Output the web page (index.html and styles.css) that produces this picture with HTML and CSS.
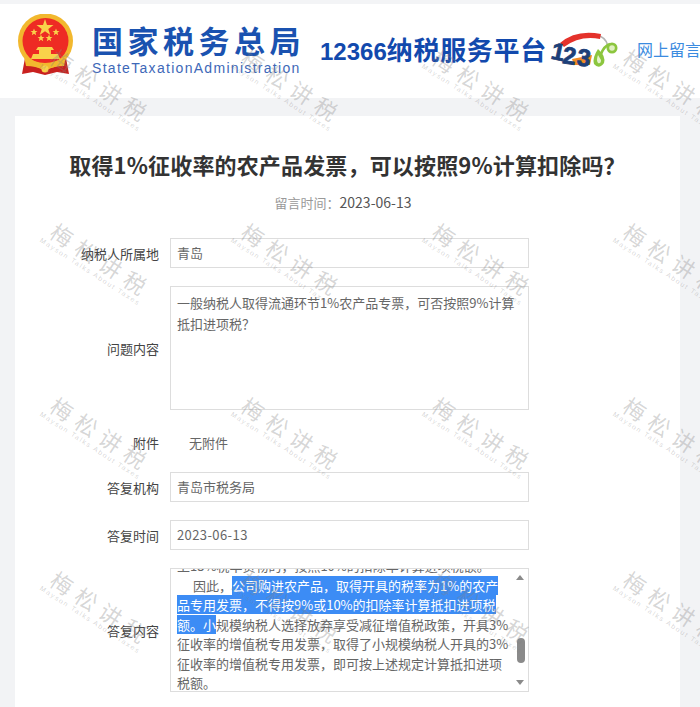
FILE: index.html

```html
<!DOCTYPE html>
<html>
<head>
  <meta charset="utf-8" />
  <meta name="viewport" content="width=device-width, initial-scale=1" />
  <title>留言详情</title>
  <link rel="stylesheet" href="styles.css">
</head>
<body>
  <div class="top-strip"></div>
  <div class="header">
    <svg class="emblem" viewBox="0 0 59 63">
      <defs>
        <polygon id="star" points="0,-3.500 1,-1 3.500,-1 1.500,0.600 2.200,3.200 0,1.700 -2.200,3.200 -1.500,0.600 -3.500,-1 -1,-1" fill="#f9d24a" />
      </defs>
      <path d="M9 44 L6 60 L17 58 L29 61 L41 58 L53 60 L50 44 Z" fill="#c9201f" />
      <circle cx="29.500" cy="27" r="27.500" fill="#f2b82e" />
      <circle cx="29.500" cy="27" r="23" fill="#ee2b24" />
      <polygon points="29,5 31,11 37.500,11 32.300,15 34.300,21 29,17.300 23.700,21 25.700,15 20.500,11 27,11" fill="#f9d24a" />
      <use href="#star" x="18" y="18" />
      <use href="#star" x="40" y="18" />
      <use href="#star" x="25" y="24" />
      <use href="#star" x="33" y="24" />
      <path d="M22 33 L36 33 L38 36 L35 36 L35 40 L42 40 L44 45 L15 45 L17 40 L23 40 L23 36 L20 36 Z" fill="#f9d24a" />
      <path d="M8 42 Q29 56 50 42 L48 52 Q38 52 31 56 L27 56 Q20 52 10 52 Z" fill="#f2b82e" />
      <circle cx="29" cy="55" r="3.500" fill="#f9d24a" />
    </svg>
    <div class="brand">
      <div class="brand-cn">国家税务总局</div>
      <div class="brand-en">StateTaxationAdministration</div>
    </div>
    <div class="platform"><span class="platform-num">12366</span>纳税服务平台</div>
    <svg class="badge" viewBox="0 0 68 50">
      <path d="M50 8 Q58 12 58 21" fill="none" stroke="#b5b5b5" stroke-width="1.500" />
      <path d="M10 15 Q26 1 51 6 L50 11 Q30 7 14 19 Z" fill="#e4322b" />
      <path d="M22 31 L42 27 L40 37 L24 37 Z" fill="#f08a24" />
      <path d="M48 21 Q42 30 44 36 Q49 42 54 35 Q56 28 48 21 Z" fill="#8cc63f" />
      <path d="M48 27 Q46 32 48 35 Q51 36 51 32 Z" fill="#e4f2cc" />
      <path d="M51 26 Q54 18 60 16" fill="none" stroke="#8cc63f" stroke-width="2.500" />
      <circle cx="62" cy="20" r="5.500" fill="#8cc63f" />
      <circle cx="62" cy="20" r="2.800" fill="#dff0c0" />
      <text class="badge-num" x="1.500" y="32" transform="rotate(12 8 24)">1</text>
      <text class="badge-num" x="13" y="36" transform="rotate(8 20 27)">2</text>
      <text class="badge-num" x="27.500" y="38" transform="rotate(8 34 29)">3</text>
    </svg>
    <div class="leave-msg">网上留言</div>
  </div>

  <div class="main">
    <div class="card">
      <h1 class="title">取得1%征收率的农产品发票，可以按照9%计算扣除吗？</h1>
      <div class="msg-time"><span class="muted">留言时间：</span><span class="date">2023-06-13</span></div>

      <div class="row row-input">
        <div class="label">纳税人所属地</div>
        <div class="field">青岛</div>
      </div>
      <div class="row row-area">
        <div class="label">问题内容</div>
        <div class="field field-area">一般纳税人取得流通环节1%农产品专票，可否按照9%计算抵扣进项税？</div>
      </div>
      <div class="row row-plain">
        <div class="label">附件</div>
        <div class="plain">无附件</div>
      </div>
      <div class="row row-input">
        <div class="label">答复机构</div>
        <div class="field">青岛市税务局</div>
      </div>
      <div class="row row-input">
        <div class="label">答复时间</div>
        <div class="field field-date">2023-06-13</div>
      </div>
      <div class="row row-area">
        <div class="label">答复内容</div>
        <div class="field field-reply">
          <div class="reply-text">
            <p>上13%税率货物的，按照10%的扣除率计算进项税额。</p>
            <p class="indent">因此，<span class="sel">公司购进农产品，取得开具的税率为1%的农产品专用发票，不得按9%或10%的扣除率计算抵扣进项税额。小</span>规模纳税人选择放弃享受减征增值税政策，开具3%征收率的增值税专用发票，取得了小规模纳税人开具的3%征收率的增值税专用发票，即可按上述规定计算抵扣进项税额。</p>
          </div>
          <div class="scrollbar">
            <span class="arrow-up"></span>
            <span class="thumb"></span>
            <span class="arrow-down"></span>
          </div>
        </div>
      </div>
    </div>
  </div>

  <div class="watermarks">
    <div class="wm"><b>梅松讲税</b><i>Mayson Talks About Taxes</i></div>
    <div class="wm"><b>梅松讲税</b><i>Mayson Talks About Taxes</i></div>
    <div class="wm"><b>梅松讲税</b><i>Mayson Talks About Taxes</i></div>
    <div class="wm"><b>梅松讲税</b><i>Mayson Talks About Taxes</i></div>
    <div class="wm"><b>梅松讲税</b><i>Mayson Talks About Taxes</i></div>
    <div class="wm"><b>梅松讲税</b><i>Mayson Talks About Taxes</i></div>
    <div class="wm"><b>梅松讲税</b><i>Mayson Talks About Taxes</i></div>
    <div class="wm"><b>梅松讲税</b><i>Mayson Talks About Taxes</i></div>
    <div class="wm"><b>梅松讲税</b><i>Mayson Talks About Taxes</i></div>
    <div class="wm"><b>梅松讲税</b><i>Mayson Talks About Taxes</i></div>
    <div class="wm"><b>梅松讲税</b><i>Mayson Talks About Taxes</i></div>
    <div class="wm"><b>梅松讲税</b><i>Mayson Talks About Taxes</i></div>
    <div class="wm"><b>梅松讲税</b><i>Mayson Talks About Taxes</i></div>
    <div class="wm"><b>梅松讲税</b><i>Mayson Talks About Taxes</i></div>
    <div class="wm"><b>梅松讲税</b><i>Mayson Talks About Taxes</i></div>
    <div class="wm"><b>梅松讲税</b><i>Mayson Talks About Taxes</i></div>
  </div>
</body>
</html>
```

FILE: styles.css

```css
html,
body {
  height: 707px;
}
body {
  margin: 0;
  position: relative;
  overflow: hidden;
  background: #f2f3f5;
  font-family: "Noto Sans CJK SC", "Liberation Sans", sans-serif;
  font-size: 13px;
  color: #666;
}
.top-strip {
  height: 4px;
  background: #f3f4f6;
}
.header {
  display: flex;
  align-items: center;
  height: 94px;
  padding-left: 16px;
  background: #fff;
  overflow: hidden;
  white-space: nowrap;
}
.emblem {
  flex: none;
  width: 59px;
  height: 63px;
  margin-top: -12px;
}
.brand {
  flex: none;
  width: 208px;
  margin-left: 17px;
  margin-top: -4px;
}
.brand-cn {
  font-size: 31px;
  font-weight: 700;
  line-height: 38px;
  letter-spacing: 4.500px;
  color: #1a52b0;
}
.brand-en {
  margin-top: 1px;
  font-family: "Liberation Sans", sans-serif;
  font-size: 14px;
  line-height: 17px;
  letter-spacing: 1.300px;
  color: #3e68b8;
}
.platform {
  flex: none;
  width: 226px;
  margin-left: 20px;
  margin-top: -6px;
  font-size: 26px;
  font-weight: 700;
  letter-spacing: 0.700px;
  color: #1249ad;
}
.platform-num {
  font-family: "Liberation Sans", sans-serif;
  font-size: 24px;
  letter-spacing: 0;
}
.badge {
  flex: none;
  width: 68px;
  height: 50px;
  margin-left: 4px;
  margin-top: 4px;
}
.badge-num {
  font-family: "Liberation Sans", sans-serif;
  font-size: 24px;
  font-weight: 700;
  fill: #1d3f78;
  stroke: #1d3f78;
  stroke-width: 0.800px;
}
.leave-msg {
  flex: none;
  margin-left: 19px;
  margin-top: -4px;
  font-size: 16px;
  color: #3b8be0;
}
.main {
  padding: 18px 20px 0 15px;
}
.card {
  height: 591px;
  padding-top: 31px;
  background: #fff;
  overflow: hidden;
}
.title {
  margin: 0;
  font-size: 22px;
  font-weight: 700;
  line-height: 34px;
  letter-spacing: 0.160px;
  text-align: center;
  color: #333;
}
.msg-time {
  margin-top: 11px;
  padding-right: 9px;
  line-height: 20px;
  text-align: center;
  color: #555;
}
.muted {
  color: #999;
}
.date {
  font-size: 14px;
}
.row {
  display: flex;
  align-items: center;
  margin-left: 40px;
}
.row-input {
  margin-bottom: 18px;
}
.row-area {
  margin-bottom: 18px;
}
.row-plain {
  height: 28px;
  margin-bottom: 16px;
}
.msg-time + .row {
  margin-top: 25px;
}
.label {
  flex: none;
  width: 104px;
  margin-right: 11px;
  text-align: right;
  color: #444;
}
.field {
  box-sizing: border-box;
  width: 359px;
  height: 30px;
  padding: 0 6px;
  border: 1px solid #ddd;
  line-height: 28px;
  color: #666;
}
.field-date {
  letter-spacing: 0.400px;
}
.field-area {
  height: 124px;
  padding: 5px 6px;
  line-height: 21px;
}
.plain {
  padding-left: 19px;
  color: #666;
}
.field-reply {
  position: relative;
  height: 124px;
  padding: 0;
  overflow: hidden;
}
.reply-text {
  margin-top: -13px;
  padding: 0 19px 0 6px;
  line-height: 19.500px;
}
.reply-text p {
  margin: 0;
}
.indent {
  text-indent: 16px;
}
.sel {
  background: #3c8cf5;
  color: #fff;
}
.scrollbar {
  position: absolute;
  top: 0;
  right: 0;
  bottom: 0;
  width: 17px;
}
.arrow-up,
.arrow-down {
  position: absolute;
  left: 5px;
  width: 0;
  height: 0;
  border-left: 4px solid transparent;
  border-right: 4px solid transparent;
}
.arrow-up {
  top: 6px;
  border-bottom: 5px solid #8a8a8a;
}
.arrow-down {
  bottom: 6px;
  border-top: 5px solid #8a8a8a;
}
.thumb {
  position: absolute;
  left: 6px;
  top: 69px;
  width: 8px;
  height: 25px;
  border-radius: 4px;
  background: #8a8a8a;
}
.watermarks {
  position: absolute;
  top: 1px;
  left: 1px;
  display: grid;
  grid-template-columns: repeat(4, 191px);
  grid-auto-rows: 174px;
  pointer-events: none;
}
.wm {
  display: flex;
  flex-direction: column;
  align-items: center;
  justify-content: center;
  color: rgba(130, 130, 130, 0.32);
  transform: rotate(33deg);
  white-space: nowrap;
}
.wm b {
  font-size: 22px;
  font-weight: 400;
  line-height: 24px;
  letter-spacing: 7px;
  margin-right: -7px;
}
.wm i {
  font-family: "Liberation Sans", sans-serif;
  font-size: 7px;
  font-style: normal;
  line-height: 10px;
  letter-spacing: 1.500px;
}
```
